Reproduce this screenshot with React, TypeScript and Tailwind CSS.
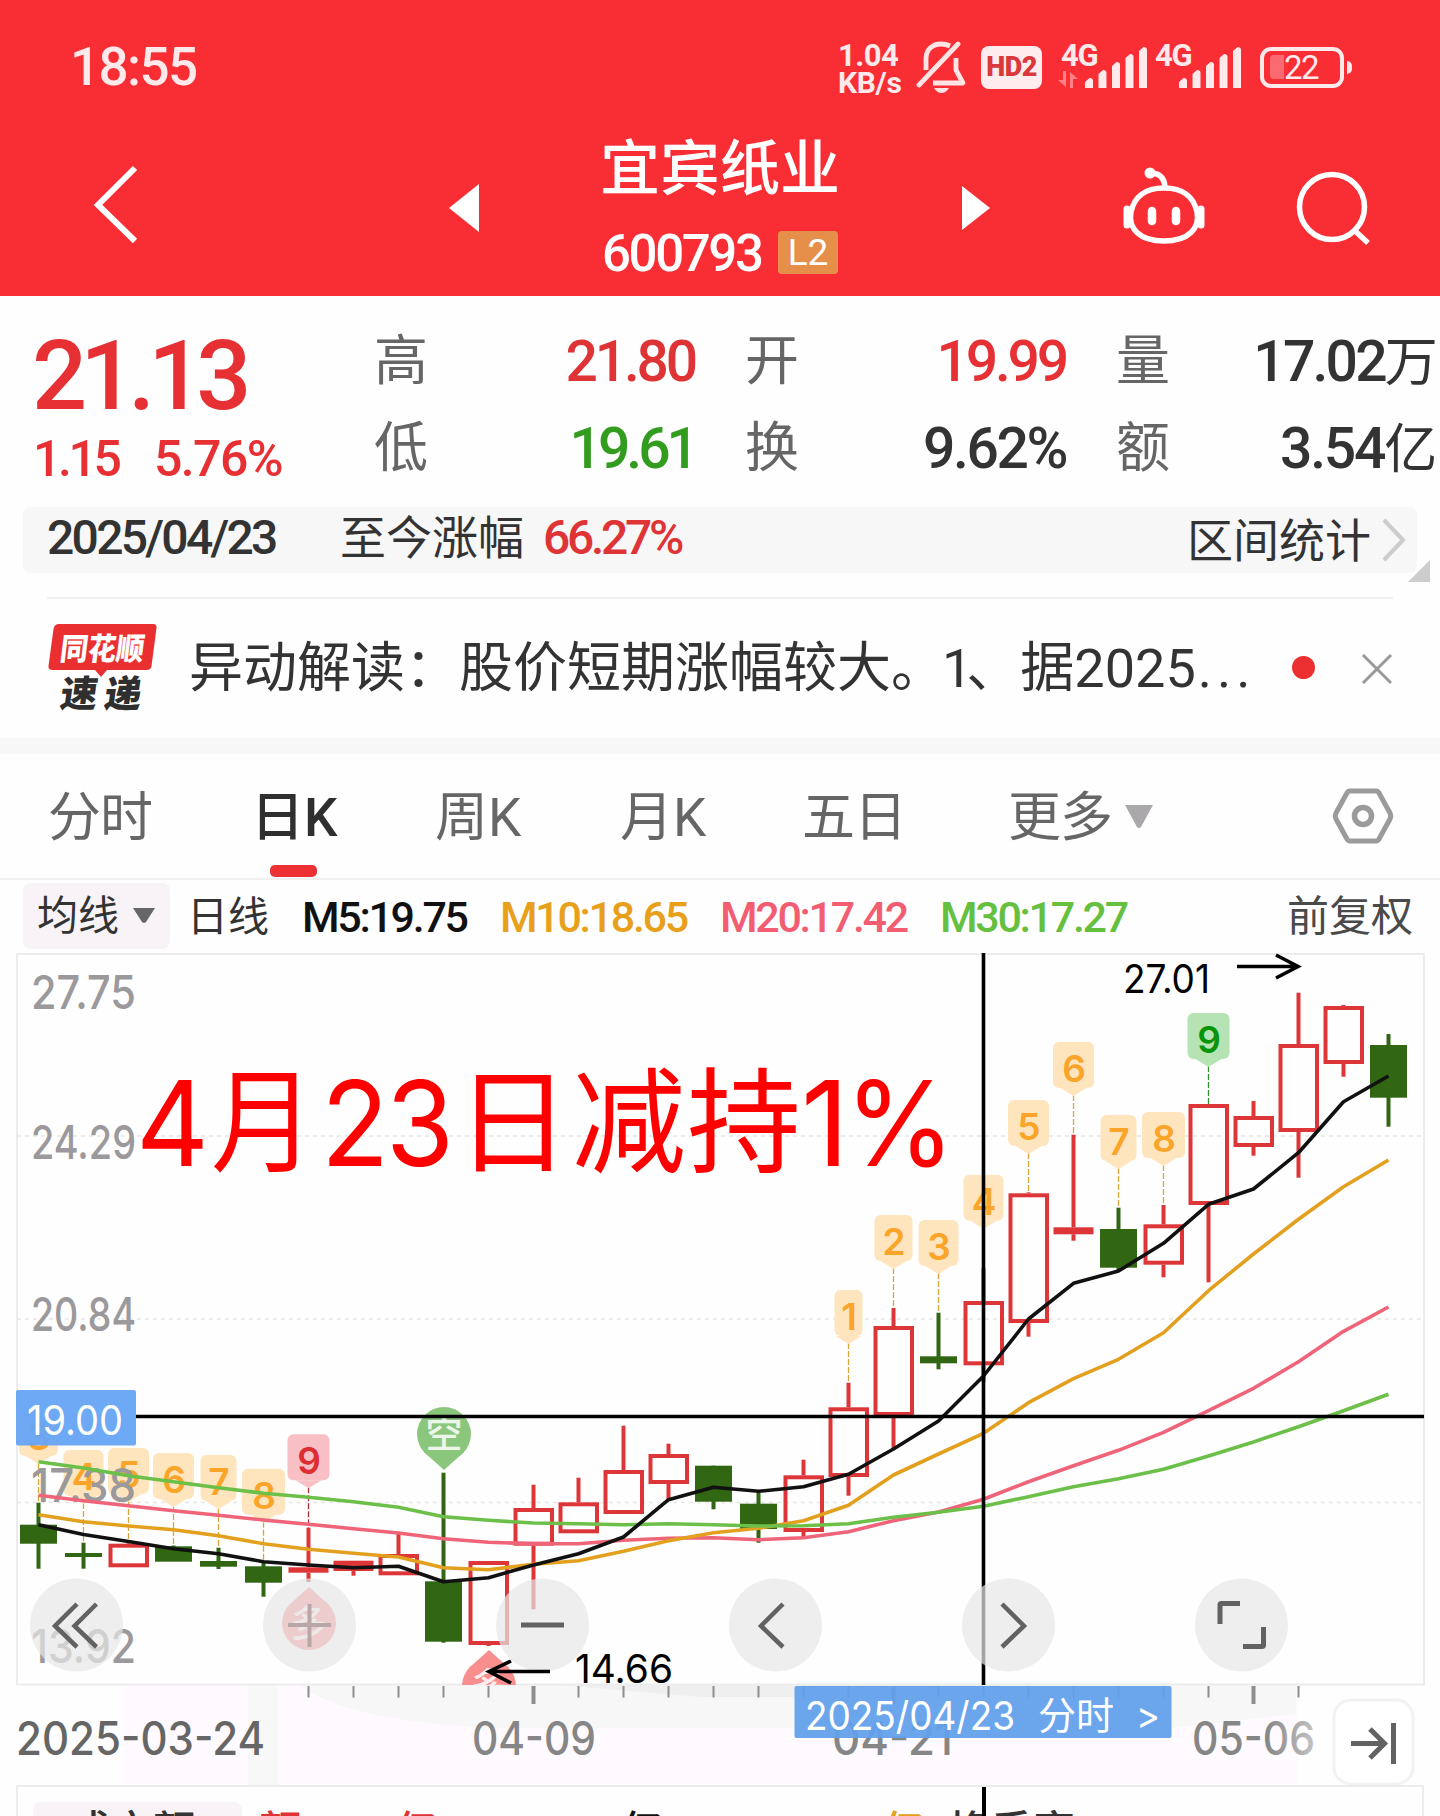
import type { ReactNode } from 'react';

type Candle = { up: boolean; top: number; bottom: number; high: number; low: number };
type Marker = { i: number; label: string; top: number; width: number; tone: 'orange' | 'red' | 'green' };

const STEP = 45;
const FIRST = 38.5;
const cx = (i: number) => FIRST + i * STEP;

// [up, body top, body bottom, wick top, wick bottom]
const raw: [number, number, number, number, number][] = [
  [0, 1524.7, 1543.7, 1502.7, 1568.7],
  [0, 1553, 1557, 1542.7, 1568.7],
  [1, 1543.7, 1567.3, 1540, 1567],
  [0, 1546.3, 1561.7, 1545.5, 1561],
  [0, 1561, 1566.7, 1547.7, 1569],
  [0, 1566.3, 1582.7, 1561.7, 1596.7],
  [1, 1567.3, 1572.7, 1527.7, 1582],
  [1, 1560.7, 1571, 1560.7, 1575.7],
  [1, 1554, 1575.3, 1533.3, 1575],
  [0, 1581.3, 1641.7, 1472.7, 1642.7],
  [1, 1561, 1645, 1561, 1646],
  [1, 1508, 1545.7, 1484.7, 1609.3],
  [1, 1502.3, 1533.3, 1477.7, 1533],
  [1, 1470, 1514, 1425.7, 1514],
  [1, 1454, 1484, 1443.7, 1499],
  [0, 1465.7, 1501.7, 1465.7, 1509.3],
  [0, 1503.7, 1529, 1492.3, 1542.7],
  [1, 1475.3, 1532, 1459.7, 1537],
  [1, 1407.3, 1477, 1382.7, 1495.7],
  [1, 1326, 1416, 1308, 1449],
  [0, 1356.3, 1363.3, 1312.7, 1369.3],
  [1, 1301, 1365.3, 1268.3, 1382],
  [1, 1193.3, 1323, 1192.3, 1336.7],
  [1, 1227.3, 1234.3, 1134.7, 1240.7],
  [0, 1229, 1267.7, 1207.7, 1270],
  [1, 1224.3, 1264.7, 1205, 1277.3],
  [1, 1104, 1205, 1104, 1282.3],
  [1, 1116, 1147, 1101, 1155.7],
  [1, 1044, 1132, 992.7, 1177.7],
  [1, 1006, 1064, 1005, 1076.7],
  [0, 1045, 1097.7, 1034, 1126.7],
];
const candles: Candle[] = raw.map(([up, top, bottom, high, low]) => ({ up: up === 1, top, bottom, high, low }));

const averages = [
  {
    color: '#f0647a',
    ys: [1495.3, 1500.7, 1505.7, 1510.7, 1515.3, 1520, 1524.3, 1528.7, 1533, 1538.7, 1542.3, 1543.7, 1543.7, 1540.3, 1538.3, 1537.7, 1539.7, 1537.7, 1531.7, 1520.7, 1512, 1499.3, 1481.7, 1465.7, 1450.3, 1432.3, 1410.7, 1388.3, 1361.7, 1331.3, 1307],
  },
  {
    color: '#e3a01f',
    ys: [1514.7, 1521.7, 1526, 1529.7, 1535.7, 1543.7, 1549.3, 1553.3, 1557, 1567.7, 1569.7, 1564.3, 1560.7, 1551.3, 1540.7, 1532.7, 1528.3, 1520.7, 1505.3, 1475, 1454, 1433.3, 1402.7, 1378.7, 1359.3, 1332.7, 1290.7, 1254, 1219.3, 1186.7, 1160],
  },
  {
    color: '#6cc04a',
    ys: [1461.7, 1468, 1475.7, 1481.7, 1487.7, 1493.3, 1497.3, 1501.7, 1507.3, 1516.7, 1520.3, 1523, 1523.7, 1524.7, 1523.7, 1524.7, 1526, 1525.7, 1523.7, 1517.3, 1512.3, 1506.3, 1496.7, 1486.7, 1478.7, 1469.3, 1456, 1442, 1426.7, 1410.7, 1394.3],
  },
  {
    color: '#111111',
    ys: [1524.7, 1534.5, 1541.5, 1548.7, 1553.7, 1561.7, 1565, 1567.7, 1566.3, 1581.7, 1577.7, 1565, 1553.7, 1537, 1499.7, 1487.3, 1491.3, 1486.7, 1474.3, 1449, 1421, 1376, 1319, 1283.3, 1271, 1243.3, 1204.3, 1189, 1152.7, 1101.7, 1076],
  },
];

const markers: Marker[] = [
  { i: 0, label: '3', top: 1410, width: 39, tone: 'orange' },
  { i: 1, label: '4', top: 1450, width: 40, tone: 'orange' },
  { i: 2, label: '5', top: 1448, width: 41, tone: 'orange' },
  { i: 3, label: '6', top: 1453, width: 41, tone: 'orange' },
  { i: 4, label: '7', top: 1455, width: 36, tone: 'orange' },
  { i: 5, label: '8', top: 1468.7, width: 43, tone: 'orange' },
  { i: 6, label: '9', top: 1434.3, width: 42, tone: 'red' },
  { i: 18, label: '1', top: 1290, width: 28, tone: 'orange' },
  { i: 19, label: '2', top: 1215, width: 38, tone: 'orange' },
  { i: 20, label: '3', top: 1220, width: 40, tone: 'orange' },
  { i: 21, label: '4', top: 1174.7, width: 40, tone: 'orange' },
  { i: 22, label: '5', top: 1100, width: 41, tone: 'orange' },
  { i: 23, label: '6', top: 1042, width: 41, tone: 'orange' },
  { i: 24, label: '7', top: 1115, width: 36, tone: 'orange' },
  { i: 25, label: '8', top: 1112, width: 43, tone: 'orange' },
  { i: 26, label: '9', top: 1013, width: 42, tone: 'green' },
];

const tones = {
  orange: { bg: '#fee5bd', fg: '#fba42a', dash: '#d9a43a' },
  red: { bg: '#f8c0c4', fg: '#dd2f33', dash: '#b03038' },
  green: { bg: '#b6e3b4', fg: '#089408', dash: '#2f8f2f' },
};

const priceLabels = [
  { text: '27.75', y: 1009 },
  { text: '24.29', y: 1159 },
  { text: '20.84', y: 1331 },
  { text: '17.38', y: 1502 },
  { text: '13.92', y: 1663 },
];

const dateLabels = [
  { text: '2025-03-24', x: 16, width: 249, color: '#666666' },
  { text: '04-09', x: 472, width: 124, color: '#868686' },
  { text: '04-21', x: 832, width: 121, color: '#868686' },
  { text: '05-06', x: 1192, width: 123, color: 'url(#fadeDate)' },
];

const annotation = [
  { t: '4', x: 136, w: 73, cjk: false },
  { t: '月', x: 211, w: 104, cjk: true },
  { t: '2', x: 321, w: 68, cjk: false },
  { t: '3', x: 386, w: 68, cjk: false },
  { t: '日', x: 456, w: 114, cjk: true },
  { t: '减', x: 572, w: 114, cjk: true },
  { t: '持', x: 687, w: 114, cjk: true },
  { t: '1', x: 801, w: 48, cjk: false },
  { t: '%', x: 845, w: 110, cjk: false },
];

const controls = [76.5, 309.5, 542.5, 775.5, 1008.5, 1241.5];

function SignalBars() {
  const heights = [10, 18, 26, 34, 41];
  return (
    <svg width="64" height="42" viewBox="0 0 64 42" fill="#ffe9eb">
      {heights.map((h, i) => (
        <path key={h} d={`M${i * 13.5} 42V${42 - h + 4}l4.500 -4q3.500 0 3.500 3V42z`} />
      ))}
    </svg>
  );
}

function StatusBar() {
  return (
    <div className="flex h-[134px] items-center pl-[70px] text-[#ffe9eb]">
      <span className="w-[768px] pt-px text-[53px] leading-none font-medium tracking-[-1.6px]">18:55</span>
      <div className="w-[78px] pt-[3px] font-bold">
        <p className="text-[31px] leading-[28px] tracking-[-0.5px]">1.04</p>
        <p className="text-[30px] leading-[26px] tracking-[-0.3px]">KB/s</p>
      </div>
      <svg width="52" height="54" viewBox="0 0 52 54" fill="none" stroke="#ffe4e6" strokeWidth="4.800" strokeLinejoin="round">
        <path d="M42 4L3 45" strokeLinecap="round" />
        <path d="M10 30V19C10 9 17 4 25 4q5 0 9 2" />
        <path d="M40 18v12l7 13H17" />
        <path d="M18 48h15q-3 5-7.500 5T18 48z" fill="#ffe4e6" stroke="none" />
      </svg>
      <div className="ml-[13px] flex h-[43px] w-[61px] items-center justify-center rounded-[8px] bg-[#ffecee] text-[27px] leading-none font-black tracking-[-0.5px] text-[#d9383c]">
        HD2
      </div>
      <div className="ml-[19px] h-[46px] w-[24px]">
        <p className="text-[31px] leading-[24px] font-bold tracking-[-1.2px]">4G</p>
        <svg width="20" height="17" viewBox="0 0 20 17" fill="#ff8087" className="-ml-[3px] mt-[3px]">
          <path d="M5 0h3v16L0 9h5zM12 17V1l8 7h-5v9z" />
        </svg>
      </div>
      <SignalBars />
      <p className="mb-[22px] ml-[6px] w-[24px] text-[31px] leading-[24px] font-bold tracking-[-1.2px]">4G</p>
      <SignalBars />
      <div className="ml-[17px] flex h-[41px] w-[84px] items-center rounded-[11px] border-4 border-[#ffe9eb] pl-[6px]">
        <span className="h-[24px] w-[14px] rounded-l-[4px] bg-[#fb6a70]" />
        <span className="text-[33px] leading-none tracking-[-1.5px]">22</span>
      </div>
      <span className="ml-[3px] h-[13px] w-[5px] rounded-r-full bg-[#ffe9eb]" />
    </div>
  );
}

function TitleBar() {
  return (
    <div className="flex h-[162px] items-start pl-[90px] text-white">
      <svg width="54" height="92" viewBox="0 0 54 92" className="mt-[26px]" fill="none" stroke="#fff" strokeWidth="6">
        <path d="M45 8L8 45l37 36" />
      </svg>
      <svg width="30" height="48" viewBox="0 0 30 48" className="mt-[50px] ml-[305px]" fill="#fff">
        <path d="M0 24L30 0v48z" />
      </svg>
      <div className="ml-[91px] flex w-[300px] flex-col items-start">
        <h1 className="mt-[3px] ml-[30px] text-[60px] leading-[66px] font-medium">宜宾纸业</h1>
        <div className="mt-[27px] ml-[32px] flex items-center">
          <span className="w-[176px] pt-[3px] text-[51px] leading-[41px] font-medium tracking-[-2.4px]">600793</span>
          <span className="flex h-[43px] w-[60px] items-center justify-center rounded-[4px] bg-[#e68f4a] text-[37px] leading-none">L2</span>
        </div>
      </div>
      <svg width="28" height="44" viewBox="0 0 28 44" className="mt-[52px] ml-[92px]" fill="#fff">
        <path d="M28 22L0 0v44z" />
      </svg>
      <svg width="86" height="80" viewBox="0 0 86 80" className="mt-[32px] ml-[131px]" fill="none" stroke="#fff" strokeWidth="5.500">
        <circle cx="29" cy="7" r="5.500" fill="#fff" stroke="none" />
        <path d="M29 7q14 0 15 14" />
        <path d="M43 22C62 22 73 31 76 46C79 62 68 75 43 75S7 62 10 46C13 31 24 22 43 22z" />
        <path d="M6 43v16M80 43v16" strokeWidth="7" strokeLinecap="round" />
        <path d="M31 45v10M55 45v10" strokeWidth="8.500" strokeLinecap="round" />
      </svg>
      <svg width="80" height="80" viewBox="0 0 80 80" className="mt-[35px] ml-[87px]" fill="none" stroke="#fff" strokeWidth="5.500">
        <circle cx="38" cy="38" r="32.500" />
        <path d="M60 61l14 13" />
      </svg>
    </div>
  );
}

function Label({ children }: { children: ReactNode }) {
  return <span className="pt-px text-[54px] leading-[84px] font-normal text-[#666]">{children}</span>;
}

function Quote() {
  return (
    <section className="flex h-[211px] pt-[23px] pl-[32px]">
      <div className="w-[342px] text-[#e63033]">
        <p className="mt-[12px] text-[97px] leading-[90px] font-medium tracking-[-7px]">21.13</p>
        <p className="mt-[14px] ml-px text-[50px] leading-[48px] font-medium tracking-[-1.6px]">
          <span className="inline-block w-[121px] tracking-[-3.4px]">1.15</span>5.76%
        </p>
      </div>
      <div className="grid h-[168px] w-[1066px] grid-cols-[60px_261px_50px_60px_261px_50px_60px_259px] text-[57px] leading-[86px] font-medium tracking-[-3.2px] text-[#333]">
        <Label>高</Label>
        <span className="text-right text-[#df3436]">21.80</span>
        <span />
        <Label>开</Label>
        <span className="text-right text-[#e63033]">19.99</span>
        <span />
        <Label>量</Label>
        <span className="text-right tracking-[-2.8px] whitespace-nowrap">17.02<span className="text-[53px] font-normal">万</span></span>
        <Label>低</Label>
        <span className="text-right tracking-[-4px] text-[#329c1e]">19.61</span>
        <span />
        <Label>换</Label>
        <span className="text-right tracking-[-2.4px]">9.62%</span>
        <span />
        <Label>额</Label>
        <span className="text-right tracking-[-2.2px] whitespace-nowrap">3.54<span className="text-[53px] font-normal">亿</span></span>
      </div>
    </section>
  );
}

function RangeBar() {
  return (
    <div className="relative mx-[23px] flex h-[66px] items-center rounded-[8px] bg-[#f7f7f7] pl-[24px] text-[#333]">
      <span className="w-[293px] pb-[4px] text-[48px] leading-none font-medium tracking-[-2.7px]">2025/04/23</span>
      <span className="w-[203px] pb-[5px] text-[46px] leading-none">至今涨幅</span>
      <span className="w-[644px] pb-[4px] text-[48px] leading-none font-medium tracking-[-3.3px] text-[#df3436]">66.27%</span>
      <span className="w-[195px] pt-px text-[46px] leading-none">区间统计</span>
      <svg width="24" height="46" viewBox="0 0 24 46" fill="none" stroke="#ccc" strokeWidth="4">
        <path d="M2 3l19 20L2 43" />
      </svg>
      <svg width="22" height="22" viewBox="0 0 22 22" className="absolute top-[53px] right-[-13px]" fill="#ccc">
        <path d="M22 0v22H0z" />
      </svg>
    </div>
  );
}

function NewsRow() {
  return (
    <div className="mx-[47px] mt-[24px] flex h-[141px] border-t-2 border-[#f0f0f0]">
      <svg width="112" height="92" viewBox="0 0 112 92" className="mt-[24px] shrink-0">
        <path d="M12 1h94q4 0 3.500 4l-5 38q-.5 4-5 4H60l-6 7-6-7H6q-5 0-4.500-4l5-37q1-5 5.500-5z" fill="#ea2f31" />
        <text transform="translate(12 37) skewX(-7)" fontSize="31" fontWeight="900" fill="#fff" textLength="84" lengthAdjust="spacingAndGlyphs">
          同花顺
        </text>
        <text transform="translate(12 84) skewX(-8)" fontSize="37" fontWeight="900" fill="#2f2f2f" textLength="81">
          速递
        </text>
      </svg>
      <p className="ml-[30px] w-[1103px] shrink-0 text-[54px] leading-[139px] whitespace-nowrap text-[#333]">
        异动解读：股价短期涨幅较大。<span className="-ml-[3px] tracking-[-6px]">1</span>、据2025<span className="ml-[2px] tracking-[5px]">...</span>
      </p>
      <span className="mt-[57px] h-[23px] w-[23px] shrink-0 rounded-full bg-[#ec2f31]" />
      <svg width="32" height="32" viewBox="0 0 32 32" className="mt-[54px] ml-[46px] shrink-0" stroke="#999" strokeWidth="3">
        <path d="M2 2l28 28M30 2L2 30" />
      </svg>
    </div>
  );
}

function Tabs() {
  return (
    <div className="flex h-[126px] items-center border-b-2 border-[#f0f0f0] pl-[48px] text-[53px] leading-none text-[#666]">
      <span className="w-[203px] pt-[4px] tracking-[-1px]">分时</span>
      <span className="relative w-[184px] pt-[4px] font-medium text-[#2f2f2f]">
        日K
        <i className="absolute top-[77px] left-[19px] h-[12px] w-[47px] rounded-[5px] bg-[#ec3033]" />
      </span>
      <span className="w-[185px] pt-[4px]">周K</span>
      <span className="w-[182px] pt-[4px]">月K</span>
      <span className="w-[206px] pt-[4px] tracking-[-1px]">五日</span>
      <span className="w-[117px] pt-[4px] tracking-[-1px]">更多</span>
      <svg width="28" height="23" viewBox="0 0 28 23" fill="#aaa8aa">
        <path d="M0 0h28L16 22q-2 2-4 0z" />
      </svg>
      <svg width="62" height="58" viewBox="0 0 62 58" className="ml-[179px]" fill="none" stroke="#9b9b9b" strokeWidth="5" strokeLinejoin="round">
        <path d="M18 4h26q2 0 3 2l11 20q1.500 3 0 6L47 52q-1 2-3 2H18q-2 0-3-2L4 32q-1.500-3 0-6L15 6q1-2 3-2z" />
        <circle cx="31" cy="29" r="8.500" strokeWidth="5.500" />
      </svg>
    </div>
  );
}

function AverageRow() {
  return (
    <div className="flex h-[72px] items-start pt-[3px] pl-[23px] text-[43px] leading-[68px] font-medium tracking-[-2.3px] whitespace-nowrap">
      <div className="flex h-[66px] w-[147px] items-center rounded-[8px] bg-[#f7f3f7] pl-[14px] text-[41px] font-normal tracking-normal text-[#333]">
        均线
        <svg width="22" height="16" viewBox="0 0 22 16" className="-mt-[1px] ml-[14px]" fill="#666">
          <path d="M0 0h22L13 14q-2 2-4 0z" />
        </svg>
      </div>
      <span className="ml-[17px] w-[115px] text-[41px] font-normal tracking-normal text-[#333]">日线</span>
      <span className="w-[198px] text-[#111]">M5:19.75</span>
      <span className="w-[220px] text-[#e8a01a]">M10:18.65</span>
      <span className="w-[220px] text-[#f35d72]">M20:17.42</span>
      <span className="w-[347px] text-[#66c040]">M30:17.27</span>
      <span className="text-[42px] font-normal tracking-normal text-[#4a4a4a]">前复权</span>
    </div>
  );
}

function Pin({ x, y, label, color, down = false }: { x: number; y: number; label: string; color: string; down?: boolean }) {
  return (
    <g>
      <path d={down ? `M${x - 20} ${y + 18}L${x} ${y + 36}L${x + 20} ${y + 18}z` : `M${x - 20} ${y - 18}L${x} ${y - 36}L${x + 20} ${y - 18}z`} fill={color} />
      <circle cx={x} cy={y} r="27" fill={color} />
      <text x={x} y={y + 14} fontSize="37" fontWeight="500" textAnchor="middle" fill="#fff" fillOpacity="0.850">{label}</text>
    </g>
  );
}

function CandleShape({ c, x }: { c: Candle; x: number }) {
  if (!c.up) {
    return (
      <g fill="#316612">
        <rect x={x - 2} y={c.high} width="4" height={c.low - c.high} />
        <rect x={x - 18.5} y={c.top} width="37" height={c.bottom - c.top} />
      </g>
    );
  }
  const h = c.bottom - c.top;
  return (
    <g fill="#dd3638">
      <rect x={x - 2} y={c.high} width="4" height={Math.max(0, c.top - c.high)} />
      <rect x={x - 2} y={c.bottom} width="4" height={Math.max(0, c.low - c.bottom)} />
      {h < 12 ? (
        <rect x={x - 20} y={c.top} width="40" height={h} />
      ) : (
        <rect x={x - 18} y={c.top + 2} width="36.500" height={h - 4} fill="none" stroke="#dd3638" strokeWidth="4" />
      )}
    </g>
  );
}

function MarkerTag({ m }: { m: Marker }) {
  const x = cx(m.i);
  const t = tones[m.tone];
  return (
    <g>
      <path d={`M${x} ${m.top + 53}V${candles[m.i].high}`} stroke={t.dash} strokeWidth="1.300" strokeDasharray="6 2" />
      <rect x={x - m.width / 2} y={m.top} width={m.width} height="46" rx="6" fill={t.bg} />
      <path d={`M${x - 13} ${m.top + 46}h26L${x} ${m.top + 54}z`} fill={t.bg} />
      <text x={x + 0.5} y={m.top + 40} fontSize="37" fontWeight="600" textAnchor="middle" fill={t.fg}>{m.label}</text>
    </g>
  );
}

function Chart() {
  return (
    <svg width="1440" height="833" viewBox="0 952 1440 833" className="block font-[Inter,'Noto_Sans_CJK_SC',sans-serif]">
      <defs>
        <clipPath id="plot"><rect x="16" y="953" width="1409" height="732" /></clipPath>
        <linearGradient id="fadeDate"><stop offset="0.600" stopColor="#868686" /><stop offset="1" stopColor="#c4c4c4" /></linearGradient>
      </defs>

      {/* Date axis background */}
      <rect x="124" y="1685" width="1174" height="100" fill="#fefaff" />
      <rect x="248" y="1685" width="30" height="100" fill="#f8f8f8" />
      <path d="M300 1685H1296V1714L1170 1728H480Q340 1718 300 1685z" fill="#f8f7f8" />
      <path d="M560 1685H1000V1697H700z" fill="#f0eff0" />

      <rect x="17" y="954" width="1407" height="730.500" fill="#fefefe" stroke="#ececec" strokeWidth="2" />
      {[1136, 1319, 1502.5].map((y) => (
        <path key={y} d={`M17 ${y}H1422`} stroke="#e6e6e6" strokeWidth="1.500" strokeDasharray="4 4" />
      ))}
      {markers.map((m) => <MarkerTag key={m.i} m={m} />)}
      {priceLabels.map((p) => (
        <text key={p.text} x="31" y={p.y} fontSize="46.500" fontWeight="500" fill="#9b999b" textLength="105" lengthAdjust="spacingAndGlyphs">{p.text}</text>
      ))}

      <g clipPath="url(#plot)">
        {candles.map((c, i) => <CandleShape key={i} c={c} x={cx(i)} />)}
        {averages.map((a) => (
          <polyline key={a.color} points={a.ys.map((y, i) => `${cx(i)},${y}`).join(' ')} fill="none" stroke={a.color} strokeWidth="3.600" strokeLinejoin="round" />
        ))}
        <Pin x={444} y={1434} label="空" color="#8bc67d" down />
        <Pin x={309} y={1623} label="多" color="#f88e8e" />
        <Pin x={489} y={1686} label="多" color="#f88e8e" />
      </g>

      {annotation.map((a) => (
        <text key={a.x} x={a.x} y={a.cjk ? 1163 : 1166} fontSize={a.cjk ? 114 : 118} fill="#ff0000" textLength={a.w} lengthAdjust="spacingAndGlyphs">{a.t}</text>
      ))}

      {/* Crosshair */}
      <path d="M983.500 953V1685M136 1416.500H1424" stroke="#000" strokeWidth="3.600" />

      {/* Floating controls */}
      {controls.map((x) => (
        <circle key={x} cx={x} cy="1625" r="46.500" fill="#e7e7e7" fillOpacity="0.700" />
      ))}
      <g fill="none" stroke="#626262" strokeWidth="4.500">
        <path d="M77 1604L55 1626L77 1647M96.500 1604L74.500 1626L96.500 1647" />
        <path d="M288 1625H331M309.500 1604V1647" stroke="#b9a7a8" strokeWidth="4" />
        <path d="M521 1625H564" strokeWidth="5" />
        <path d="M783 1604L761 1626L783 1647" />
        <path d="M1002 1604L1024 1626L1002 1647" />
        <path d="M1220 1624V1605q0-1.500 1.500-1.500H1240M1243 1646.500H1262q1.500 0 1.500-1.500V1627" strokeWidth="5" />
      </g>

      {/* Extremes */}
      <g fill="none" stroke="#000" strokeWidth="3.600">
        <path d="M550 1671.500H489M511 1661L489 1671.500L511 1683" />
        <path d="M1237 966.500H1298M1276 955L1298 966.500L1276 978" />
      </g>
      <text x="575" y="1682.500" fontSize="39" textLength="98" lengthAdjust="spacingAndGlyphs">14.66</text>
      <text x="1123" y="992.500" fontSize="39" textLength="87" lengthAdjust="spacingAndGlyphs">27.01</text>

      <rect x="16" y="1390" width="120" height="55.500" rx="2" fill="#66a4f6" fillOpacity="0.950" />
      <text x="27" y="1435" fontSize="41" fill="#fff" textLength="96" lengthAdjust="spacingAndGlyphs">19.00</text>

      {/* Date axis */}
      {candles.map((_, i) =>
        i < 6 || i > 28 ? null : (
          <path key={i} d={`M${cx(i)} 1686V${i === 11 || i === 19 || i === 27 ? 1704 : 1697.5}`} stroke="#8f8d8f" strokeWidth={i === 11 || i === 19 || i === 27 ? 4 : 2} />
        ),
      )}
      {dateLabels.map((d) => (
        <text key={d.text} x={d.x} y="1754.500" fontSize="46" fontWeight="500" fill={d.color} textLength={d.width} lengthAdjust="spacingAndGlyphs">{d.text}</text>
      ))}
      <rect x="794.500" y="1686" width="377" height="52" rx="2" fill="#62a0ec" fillOpacity="0.940" />
      <g fill="#fff">
        <text x="805" y="1730" fontSize="39" textLength="210" lengthAdjust="spacingAndGlyphs">2025/04/23</text>
        <text x="1038" y="1729" fontSize="38" textLength="76">分时</text>
        <text x="1136" y="1729" fontSize="38" textLength="24" lengthAdjust="spacingAndGlyphs">&gt;</text>
      </g>
      <rect x="1334" y="1700" width="79" height="84" rx="17" fill="#fff" stroke="#f4f1f5" strokeWidth="3" />
      <path d="M1351 1743.500H1384M1370 1729L1384.500 1743.500L1370 1758M1393.500 1723V1764" fill="none" stroke="#626262" strokeWidth="5" />
    </svg>
  );
}

function VolumeHeader() {
  return (
    <div className="relative mx-[16px] flex h-[31px] overflow-hidden border-x-2 border-t-2 border-[#ececec] pt-[15px] pl-[15px] text-[42px] leading-[59px] font-medium whitespace-nowrap">
      <span className="h-[66px] w-[209px] shrink-0 rounded-[8px] bg-[#f7f3f7] pl-[36px] text-[#333]">成交额</span>
      <span className="ml-[17px] w-[204px] shrink-0 text-[#df3436]">额:3.54亿</span>
      <span className="w-[230px] shrink-0 tracking-[0.4px] text-[#111]">M5:3.08亿</span>
      <span className="w-[256px] shrink-0 tracking-[-1.5px] text-[#e8a01a]">M10:2.252亿</span>
      <span className="w-[150px] shrink-0 text-[#333]">换手率</span>
      <span className="text-[#4cc3d9]">9.62%</span>
      <i className="absolute top-[-2px] left-[964px] h-[33px] w-[4px] bg-black" />
    </div>
  );
}

export default function App() {
  return (
    <main className="h-[1816px] w-[1440px] overflow-hidden bg-[#fefefe] font-[Roboto,'Noto_Sans_CJK_SC',sans-serif]">
      <header className="h-[296px] bg-[#f92d34]">
        <StatusBar />
        <TitleBar />
      </header>
      <Quote />
      <RangeBar />
      <NewsRow />
      <div className="h-[16px] bg-[#f7f7f7]" />
      <Tabs />
      <AverageRow />
      <Chart />
      <VolumeHeader />
    </main>
  );
}
